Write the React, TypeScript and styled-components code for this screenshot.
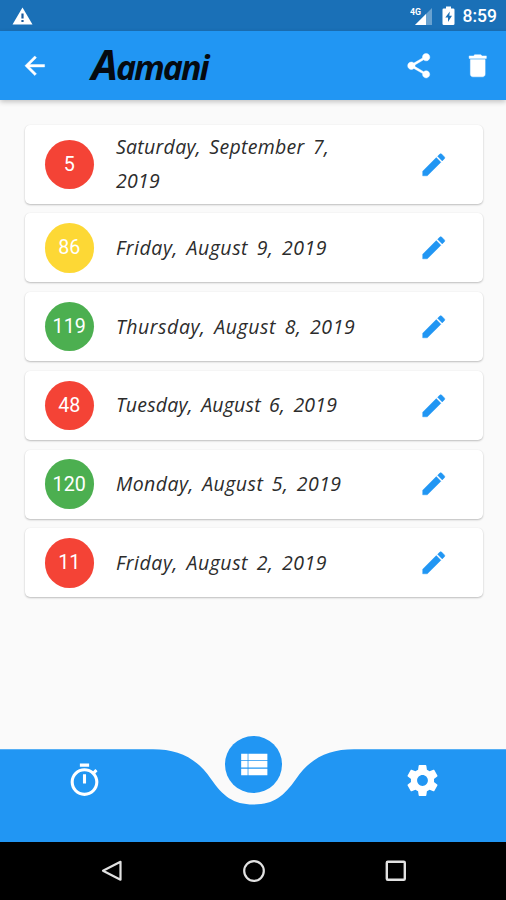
import React from "react";
import styled, { createGlobalStyle } from "styled-components";

const GlobalStyle = createGlobalStyle`
  * { box-sizing: border-box; }
  body { margin: 0; background: #fafafa; }
`;

const Screen = styled.div`
  width: 506px;
  height: 900px;
  display: flex;
  flex-direction: column;
  background: #fafafa;
  overflow: hidden;
  font-family: Roboto, sans-serif;
`;

const StatusBar = styled.header`
  height: 31px;
  flex: none;
  display: flex;
  align-items: center;
  padding: 1px 9px 0 12px;
  background: #1a70b7;
  color: #fff;
`;

const StatusIcons = styled.div`
  margin-left: auto;
  display: flex;
  align-items: center;
`;

const Network = styled.div`
  display: flex;
  margin-right: 9px;
`;

const Clock = styled.span`
  margin-left: 8px;
  font-size: 17.5px;
  line-height: 20px;
  font-weight: 500;
`;

const AppBar = styled.div`
  height: 69px;
  flex: none;
  display: flex;
  align-items: center;
  padding: 0 14px 0 20px;
  background: #2196f3;
  color: #fff;
  box-shadow: 0 2px 5px rgba(0, 0, 0, 0.22);
`;

const Title = styled.h1`
  margin: 0 auto 0 42px;
  color: #050a10;
  font: italic 700 34px/48px "Open Sans", sans-serif;
  letter-spacing: -2px;
  &::first-letter { font-size: 42px; }
`;

const Actions = styled.div`
  display: flex;
  gap: 29px;
`;

const IconButton = styled.button`
  display: flex;
  padding: 0;
  border: 0;
  margin: 0;
  background: none;
  color: inherit;
`;

const List = styled.main`
  flex: 1;
  display: flex;
  flex-direction: column;
  gap: 9.8px;
  padding: 25px 23px 0 24.5px;
`;

const Card = styled.article<{ $tall?: boolean }>`
  height: ${(p) => (p.$tall ? 78.7 : 68.95)}px;
  flex: none;
  display: flex;
  align-items: center;
  padding: 0 35px 0 20px;
  border-radius: 5px;
  background: #fff;
  box-shadow: 0 1px 2px rgba(0, 0, 0, 0.24), 0 0 1px rgba(0, 0, 0, 0.08);
`;

const Score = styled.div<{ $color: string }>`
  width: 49.4px;
  height: 49.4px;
  flex: none;
  display: flex;
  align-items: center;
  justify-content: center;
  border-radius: 50%;
  background: ${(p) => p.$color};
  color: #fff;
  font-size: 19.7px;
`;

const DateText = styled.p<{ $tracking: number }>`
  width: 250px;
  margin: 0 auto 0 22px;
  color: #2c2c2c;
  font: italic 400 19.5px/34px "Open Sans", sans-serif;
  letter-spacing: ${(p) => p.$tracking}px;
  word-spacing: 3px;
  white-space: pre-line;
`;

const EditButton = styled(IconButton)`
  color: #2196f3;
`;

const BottomBar = styled.nav`
  position: relative;
  height: 106px;
  flex: none;
  display: flex;
  align-items: flex-start;
  justify-content: space-between;
  padding: 0 65px 0 66px;
  color: #fff;
`;

const BarShape = styled.svg`
  position: absolute;
  inset: 0;
`;

const Tab = styled(IconButton)`
  position: relative;
  padding-top: 26px;
`;

const ActiveTab = styled(IconButton)`
  position: relative;
  width: 57px;
  height: 57px;
  align-items: center;
  justify-content: center;
  border-radius: 50%;
  background: #2196f3;
`;

const SystemBar = styled.footer`
  height: 58px;
  flex: none;
  display: flex;
  align-items: center;
  justify-content: space-between;
  padding: 0 98px 0 99px;
  background: #000;
`;

const paths = {
  back: "M20 11H7.83l5.59-5.59L12 4l-8 8 8 8 1.41-1.41L7.83 13H20v-2z",
  share:
    "M18 16.08c-.76 0-1.44.3-1.96.77L8.91 12.7c.05-.23.09-.46.09-.7s-.04-.47-.09-.7l7.05-4.11c.54.5 1.25.81 2.04.81 1.66 0 3-1.34 3-3s-1.34-3-3-3-3 1.34-3 3c0 .24.04.47.09.7L8.04 9.81C7.5 9.31 6.79 9 6 9c-1.66 0-3 1.34-3 3s1.34 3 3 3c.79 0 1.5-.31 2.04-.81l7.12 4.16c-.05.21-.08.43-.08.65 0 1.61 1.31 2.92 2.92 2.92s2.92-1.31 2.92-2.92-1.31-2.92-2.92-2.92z",
  remove: "M6 19c0 1.1.9 2 2 2h8c1.1 0 2-.9 2-2V7H6v12zM19 4h-3.5l-1-1h-5l-1 1H5v2h14V4z",
  edit: "M3 17.25V21h3.75L17.81 9.94l-3.75-3.75L3 17.25zM20.71 7.04c.39-.39.39-1.02 0-1.41l-2.34-2.34c-.39-.39-1.02-.39-1.41 0l-1.83 1.83 3.75 3.75 1.83-1.83z",
  timer:
    "M15 1H9v2h6V1zm-4 13h2V8h-2v6zm8.03-6.61l1.42-1.42c-.43-.51-.9-.99-1.41-1.41l-1.42 1.42C16.07 4.74 14.12 4 12 4c-4.97 0-9 4.03-9 9s4.02 9 9 9 9-4.03 9-9c0-2.12-.74-4.07-1.97-5.61zM12 20c-3.87 0-7-3.13-7-7s3.13-7 7-7 7 3.13 7 7-3.13 7-7 7z",
  list: "M4 14h4.2v-4.2H4V14zm0 5h4.2v-4.2H4V19zM4 9.2h4.2V5H4v4.2zM8.7 14H21V9.8H8.7V14zm0 5H21v-4.2H8.7V19zM8.7 5v4.2H21V5H8.7z",
  settings:
    "M19.43 12.98c.04-.32.07-.64.07-.98s-.03-.66-.07-.98l2.11-1.65c.19-.15.24-.42.12-.64l-2-3.46c-.12-.22-.39-.3-.61-.22l-2.49 1c-.52-.4-1.08-.73-1.69-.98l-.38-2.65C14.46 2.18 14.25 2 14 2h-4c-.25 0-.46.18-.49.42l-.38 2.65c-.61.25-1.17.59-1.69.98l-2.49-1c-.23-.09-.49 0-.61.22l-2 3.46c-.13.22-.07.49.12.64l2.11 1.65c-.04.32-.07.65-.07.98s.03.66.07.98l-2.11 1.65c-.19.15-.24.42-.12.64l2 3.46c.12.22.39.3.61.22l2.49-1c.52.4 1.08.73 1.69.98l.38 2.65c.03.24.24.42.49.42h4c.25 0 .46-.18.49-.42l.38-2.65c.61-.25 1.17-.59 1.69-.98l2.49 1c.23.09.49 0 .61-.22l2-3.46c.12-.22.07-.49-.12-.64l-2.11-1.65zM12 15.5c-1.93 0-3.5-1.57-3.5-3.5s1.57-3.5 3.5-3.5 3.5 1.57 3.5 3.5-1.57 3.5-3.5 3.5z",
};

function Icon({ name, size = 29.5 }: { name: keyof typeof paths; size?: number }) {
  return (
    <svg width={size} height={size} viewBox="0 0 24 24" fill="currentColor" stroke="currentColor" strokeWidth={size > 30 ? 0 : 0.35} aria-hidden="true">
      <path d={paths[name]} />
    </svg>
  );
}

const RED = "#f44336";
const YELLOW = "#fdd835";
const GREEN = "#4caf50";

const entries = [
  { score: 5, color: RED, date: "Saturday, September 7,\n2019", tracking: 0.3, tall: true },
  { score: 86, color: YELLOW, date: "Friday, August 9, 2019", tracking: 0.55 },
  { score: 119, color: GREEN, date: "Thursday, August 8, 2019", tracking: 0.58 },
  { score: 48, color: RED, date: "Tuesday, August 6, 2019", tracking: 0.22 },
  { score: 120, color: GREEN, date: "Monday, August 5, 2019", tracking: 0.45 },
  { score: 11, color: RED, date: "Friday, August 2, 2019", tracking: 0.55 },
];

export default function App() {
  return (
    <>
      <GlobalStyle />
      <Screen>
        <StatusBar>
          <svg width="21" height="18" viewBox="0 0 21 18">
            <path d="M10.5 .5 20.5 17.5H.5z" fill="#fff" />
            <path d="M9.4 6.5h2.2v5H9.4zM9.4 13h2.2v2H9.4z" fill="#1a5a9c" />
          </svg>
          <StatusIcons>
            <Network>
              <svg width="23" height="20" viewBox="0 0 23 20">
                <path d="M22 2v17H5z" fill="#fff" opacity=".35" />
                <path d="M16 8v11H5z" fill="#fff" />
                <text x="0" y="9" fill="#fff" fontFamily="Roboto, sans-serif" fontSize="9.5" fontWeight="700" textLength="11" lengthAdjust="spacingAndGlyphs">4G</text>
              </svg>
            </Network>
            <svg width="13" height="20" viewBox="0 0 13 20">
              <path d="M4 .5h5v2h2.2a1.300 1.300 0 0 1 1.300 1.300v14a1.300 1.300 0 0 1-1.300 1.300H1.800a1.300 1.300 0 0 1-1.300-1.300v-14a1.300 1.300 0 0 1 1.300-1.300H4z" fill="#fff" />
              <path d="M7.800 5.500 3.300 11.500H6v4.500l4-6.200H7.300z" fill="#1a70b7" />
            </svg>
            <Clock>8:59</Clock>
          </StatusIcons>
        </StatusBar>
        <AppBar>
          <IconButton aria-label="Back"><Icon name="back" /></IconButton>
          <Title>Aamani</Title>
          <Actions>
            <IconButton aria-label="Share"><Icon name="share" /></IconButton>
            <IconButton aria-label="Delete"><Icon name="remove" /></IconButton>
          </Actions>
        </AppBar>
        <List>
          {entries.map((e) => (
            <Card key={e.date} $tall={e.tall}>
              <Score $color={e.color}>{e.score}</Score>
              <DateText $tracking={e.tracking}>{e.date}</DateText>
              <EditButton aria-label="Edit"><Icon name="edit" /></EditButton>
            </Card>
          ))}
        </List>
        <BottomBar>
          <BarShape width="506" height="106" viewBox="0 0 506 106">
            <path
              d="M0 13.300H153C178 13.300 197 22 211 43C223 60 233 68.500 253.500 68.500S284 60 296 43C310 22 329 13.300 354 13.300H506V106H0Z"
              fill="#2196f3"
            />
          </BarShape>
          <Tab aria-label="Timer"><Icon name="timer" size={37} /></Tab>
          <ActiveTab aria-label="List"><Icon name="list" size={37} /></ActiveTab>
          <Tab aria-label="Settings"><Icon name="settings" size={37} /></Tab>
        </BottomBar>
        <SystemBar>
          <svg width="24" height="24" viewBox="0 0 24 24">
            <path d="M21.500 2.800V20.700L4 11.800Z" fill="none" stroke="#e2e2e2" strokeWidth="2.200" strokeLinejoin="round" />
          </svg>
          <svg width="24" height="24" viewBox="0 0 24 24">
            <circle cx="12" cy="12" r="9.800" fill="none" stroke="#e2e2e2" strokeWidth="2.200" />
          </svg>
          <svg width="24" height="24" viewBox="0 0 24 24">
            <rect x="2.800" y="2.800" width="18" height="18" rx="1" fill="none" stroke="#e2e2e2" strokeWidth="2.400" />
          </svg>
        </SystemBar>
      </Screen>
    </>
  );
}
